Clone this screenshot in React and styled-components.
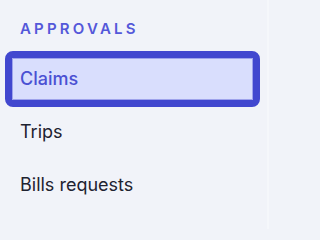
import React from "react";
import styled, { createGlobalStyle } from "styled-components";

const GlobalStyle = createGlobalStyle`
  html, body {
    margin: 0;
    padding: 0;
    background: #f1f3f9;
  }
  body {
    font-family: "Inter", "Liberation Sans", sans-serif;
  }
`;

const items = [
  { label: "Claims", active: true },
  { label: "Trips" },
  { label: "Bills requests" },
];

const Sidebar = () => {
  return (
    <Wrapper>
      <SectionTitle>Approvals</SectionTitle>
      <NavList>
        {items.map((item) => (
          <NavItem key={item.label} $active={item.active}>
            {item.label}
          </NavItem>
        ))}
      </NavList>
    </Wrapper>
  );
};

const App = () => (
  <>
    <GlobalStyle />
    <Sidebar />
  </>
);

const Wrapper = styled.nav`
  box-sizing: border-box;
  width: 269px;
  height: 229px;
  padding: 19px 14px 0 12px;
  background: #f1f3f9;
  border-right: 2px solid #f5f7fb;
`;

const SectionTitle = styled.div`
  padding-left: 8px;
  margin-bottom: 19px;
  font-size: 15px;
  line-height: 20px;
  font-weight: 600;
  letter-spacing: 3.2px;
  text-transform: uppercase;
  color: #5458d9;
`;

const NavList = styled.div`
  display: flex;
  flex-direction: column;
  gap: 11px;
`;

const NavItem = styled.a`
  box-sizing: border-box;
  display: block;
  height: 42px;
  padding: 0 7px;
  font-size: 18px;
  line-height: 40px;
  border: 1px solid ${(p) => (p.$active ? "#9ea3ec" : "transparent")};
  border-radius: 1px;
  background: ${(p) => (p.$active ? "#d9defd" : "transparent")};
  color: ${(p) => (p.$active ? "#4a50d3" : "#1e2230")};
  font-weight: ${(p) => (p.$active ? 500 : 400)};
  outline: ${(p) => (p.$active ? "7px solid #4147cf" : "none")};
  cursor: pointer;
`;

export default App;
